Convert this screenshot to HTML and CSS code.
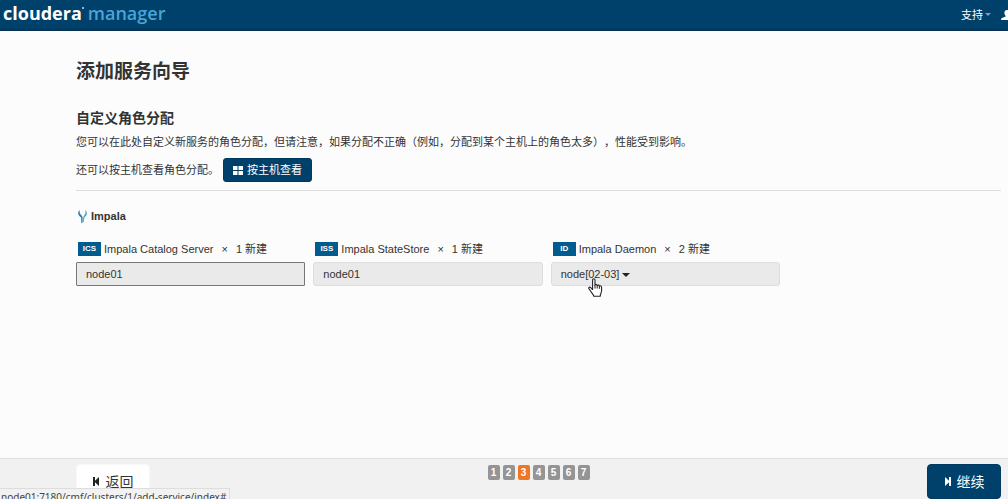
FILE: index.html
```
<!DOCTYPE html>
<html lang="zh-CN">
<head>
  <meta charset="UTF-8">
  <title>添加服务向导 - Cloudera Manager</title>
  <meta name="viewport" content="width=device-width, initial-scale=1.0">
  <link rel="stylesheet" href="styles.css">
</head>
<body>
  <header class="navbar">
    <a class="brand" href="#"><span class="brand-name">cloudera</span><span class="brand-dot"></span><span class="brand-product">manager</span></a>
    <nav class="nav-right">
      <a class="nav-link" href="#">支持<span class="caret caret-nav"></span></a>
      <a class="nav-user" href="#" aria-label="用户">
        <svg width="12" height="10" viewBox="0 0 12 10"><path fill="#fff" d="M6 0c1.700 0 2.600 1.200 2.600 2.800 0 1.300-.6 2.300-1.200 2.900v.9l3.600 1.400c.6.300 1 .8 1 2H0c0-1.200.4-1.700 1-2l3.600-1.400v-.9C4 5.100 3.400 4.100 3.400 2.800 3.400 1.200 4.300 0 6 0z"/></svg>
      </a>
    </nav>
  </header>

  <main class="content">
    <h1>添加服务向导</h1>
    <h2>自定义角色分配</h2>
    <p class="intro">您可以在此处自定义新服务的角色分配，但请注意，如果分配不正确（例如，分配到某个主机上的角色太多），性能受到影响。</p>
    <div class="view-by">
      <span>还可以按主机查看角色分配。</span>
      <button class="btn btn-small" type="button">
        <svg width="10" height="9" viewBox="0 0 10 9"><path fill="#fff" d="M0 0h4.500v4H0zM5.500 0H10v4H5.500zM0 5h4.500v4H0zM5.500 5H10v4H5.500z"/></svg>
        按主机查看
      </button>
    </div>

    <section class="service">
      <h3>
        <svg width="9" height="13" viewBox="0 0 9 13"><path fill="#2c7fae" d="M1.800 0C1.600 1.500 1.500 2.600 2 3.600c.6 1.200 1.800 1.700 2.300 3 .5 1.600.3 3.800.2 6.400H3.300c-.1-2.300 0-4.300-.4-5.400C2.500 6.600 1.300 6.300.6 4.900-.2 3.200.3 1.200 1.800 0z"/><path fill="#4f9cc4" d="M7.300 0c1.500 1.300 2 3.300 1.200 5-.6 1.300-1.700 1.600-2.100 2.600-.4 1.100-.4 2.600-.7 4.400H5c0-2 0-4 .4-5.300.4-1.200 1.400-1.800 1.900-3C7.700 2.700 7.500 1.500 7.300 0z"/></svg>
        Impala
      </h3>
      <div class="roles">
        <div class="role">
          <div class="role-label" id="role-ics"><span class="badge">ICS</span><span class="role-name">Impala Catalog Server</span><span class="times">×</span><span>1 新建</span></div>
          <button class="host-picker focused" type="button" aria-describedby="role-ics">node01</button>
        </div>
        <div class="role">
          <div class="role-label" id="role-iss"><span class="badge">ISS</span><span class="role-name">Impala StateStore</span><span class="times">×</span><span>1 新建</span></div>
          <button class="host-picker" type="button" aria-describedby="role-iss">node01</button>
        </div>
        <div class="role">
          <div class="role-label" id="role-id"><span class="badge">ID</span><span class="role-name">Impala Daemon</span><span class="times">×</span><span>2 新建</span></div>
          <button class="host-picker" type="button" aria-describedby="role-id">node[02-03]<span class="caret"></span></button>
          <svg class="pointer" width="15" height="19" viewBox="0 0 15 19"><path fill="#fff" stroke="#222" stroke-width="1.100" stroke-linejoin="round" d="M4.600 11.500V2c0-1.700 2.400-1.700 2.400 0v5.200c.3-1.100 2.100-.9 2.200.4.500-.9 2.100-.6 2.200.6.700-.8 2.200-.3 2.200 1v3.600c0 1.800-1.200 2.500-1.400 5.500H5.800c-.4-2-2.400-3.600-3.300-5.300L.9 10.600c-.6-1.300.9-2 1.900-.9z"/><path stroke="#222" d="M7 7v3.500M9.200 7.600v3M11.400 8.200v2.600"/></svg>
        </div>
      </div>
    </section>
  </main>

  <footer class="wizard-bar">
    <button class="btn btn-back" type="button">
      <svg width="7" height="9" viewBox="0 0 7 9"><path fill="#222" d="M0 0h2v3.800L6 0v9L2 5.200V9H0z"/></svg>
      返回
    </button>
    <nav class="steps" aria-label="步骤">
      <a class="step" href="#">1</a>
      <a class="step" href="#">2</a>
      <a class="step current" href="#" aria-current="step">3</a>
      <a class="step" href="#">4</a>
      <a class="step" href="#">5</a>
      <a class="step" href="#">6</a>
      <a class="step" href="#">7</a>
    </nav>
    <button class="btn btn-next" type="button">
      <svg width="7" height="9" viewBox="0 0 7 9"><path fill="#fff" d="M7 0H5v3.800L1 0v9l4-3.800V9h2z"/></svg>
      继续
    </button>
  </footer>

  <div class="status-url">node01:7180/cmf/clusters/1/add-service/index#</div>
</body>
</html>
```
FILE: styles.css
```
* {
  box-sizing: border-box;
}
body {
  display: flex;
  flex-direction: column;
  min-height: 100vh;
  margin: 0;
  overflow: hidden;
  background: #fcfcfc;
  color: #333;
  font-family: "Liberation Sans", "Noto Sans CJK SC", sans-serif;
  font-size: 11px;
  line-height: 16px;
  text-spacing-trim: space-all;
}
a {
  color: inherit;
  text-decoration: none;
}
button {
  font: inherit;
  cursor: pointer;
}

/* top bar */
.navbar {
  display: flex;
  justify-content: space-between;
  height: 31px;
  padding-left: 3px;
  overflow: hidden;
  background: #00416b;
  border-bottom: 2px solid #0b3350;
  color: #fff;
}
.brand {
  display: flex;
  font-family: "Open Sans", sans-serif;
  font-size: 18px;
  font-weight: 700;
  line-height: 26px;
}
.brand-dot {
  width: 2px;
  height: 2px;
  margin: 7px 4px 0 0;
  background: #8fb4cc;
}
.brand-product {
  color: #49a5d8;
  font-weight: 600;
}
.nav-right {
  display: flex;
  align-items: center;
  margin-right: -5px;
}
.nav-link {
  display: flex;
  align-items: center;
  margin-right: 10px;
}
.nav-user {
  display: flex;
}
.caret {
  display: inline-block;
  margin-left: 3px;
  border: 4px solid transparent;
  border-top-color: #222;
  border-bottom: 0;
  vertical-align: middle;
}
.caret-nav {
  margin-left: 2px;
  border-width: 3px;
  border-bottom: 0;
  border-top-color: #7f9fb5;
}

/* page */
.content {
  flex: 1;
  padding: 27px 7px 0 76px;
}
h1, h2, h3, p {
  margin: 0;
}
h1 {
  font-size: 19px;
  line-height: 28px;
}
h2 {
  margin-top: 22px;
  font-size: 14px;
  line-height: 20px;
}
.intro {
  margin-top: 6px;
}
.view-by {
  display: flex;
  align-items: center;
  gap: 4px;
  padding-bottom: 8px;
  margin-top: 8px;
  border-bottom: 1px solid #ddd;
}
.btn {
  display: flex;
  align-items: center;
  justify-content: center;
  border: 1px solid #003a60;
  border-radius: 3px;
  background: #00416b;
  color: #fff;
}
.btn-small {
  gap: 4px;
  height: 24px;
  padding: 0 9px;
}

/* roles */
.service {
  margin-top: 17px;
}
h3 {
  display: flex;
  align-items: center;
  gap: 4px;
  padding-left: 2px;
  font-size: 11px;
}
.roles {
  display: grid;
  grid-template-columns: repeat(3, 1fr);
  gap: 8px;
  max-width: 704px;
  margin-top: 17px;
}
.role {
  position: relative;
}
.role-label {
  display: flex;
  align-items: center;
  padding-left: 2px;
}
.badge {
  width: 23px;
  margin-right: 3px;
  background: #005c8f;
  color: #fff;
  font-size: 8px;
  font-weight: bold;
  line-height: 14px;
  text-align: center;
}
.times {
  margin: 0 8px;
}
.host-picker {
  display: block;
  width: 100%;
  height: 24px;
  margin-top: 5px;
  padding: 0 9px;
  border: 1px solid #ddd;
  border-radius: 3px;
  background: #eaeaea;
  color: #333;
  text-align: left;
}
.host-picker.focused {
  border-color: #777;
  border-radius: 1px;
}
.pointer {
  position: absolute;
  top: 37px;
  left: 37px;
}

/* wizard footer */
.wizard-bar {
  display: grid;
  grid-template-columns: 1fr auto 1fr;
  height: 41px;
  padding: 5px 7px 0 76px;
  background: #f1f1f1;
  border-top: 1px solid #ddd;
}
.btn-back,
.btn-next {
  gap: 6px;
  width: 74px;
  height: 35px;
  border-radius: 4px;
  font-size: 14px;
}
.btn-back {
  background: #fff;
  border-color: #f8f8f8;
  color: #333;
}
.btn-next {
  justify-self: end;
}
.steps {
  display: flex;
  gap: 3px;
  padding-top: 1px;
}
.step {
  width: 12px;
  height: 15px;
  border-radius: 2px;
  background: #949494;
  color: #fff;
  font-size: 10px;
  font-weight: bold;
  line-height: 15px;
  text-align: center;
}
.step.current {
  background: #ee7624;
}

/* link address shown over the bottom left corner */
.status-url {
  position: fixed;
  left: 0;
  bottom: 0;
  height: 11px;
  padding: 0 3px 0 1px;
  overflow: hidden;
  background: #f2f2f2;
  border: 1px solid #ddd;
  border-left: 0;
  border-bottom: 0;
  color: #444;
  font-family: "Noto Sans", sans-serif;
  font-size: 10px;
}
```
